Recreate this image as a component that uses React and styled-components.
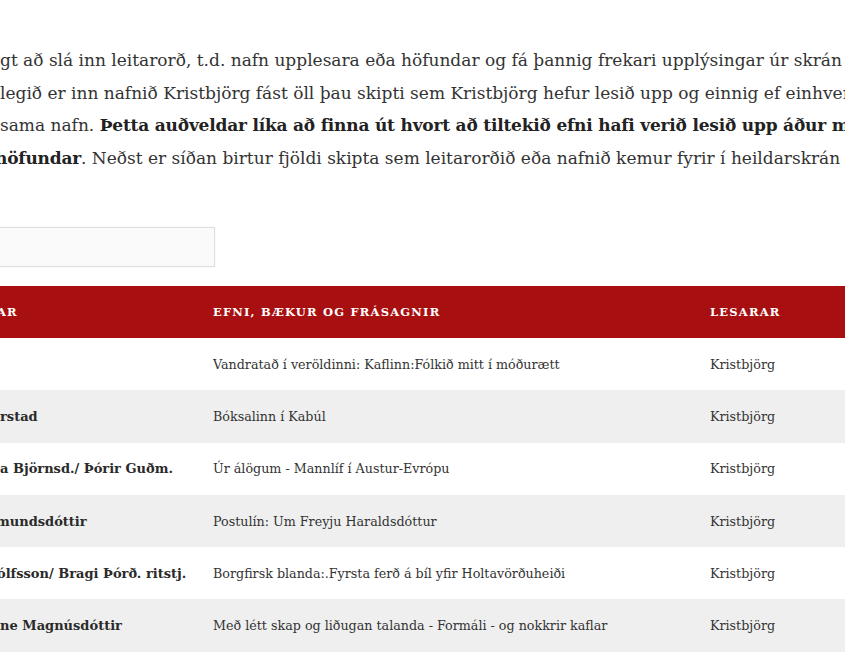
import React from "react";
import styled, { createGlobalStyle } from "styled-components";

const GlobalStyle = createGlobalStyle`
  html, body {
    margin: 0;
    padding: 0;
    background: #fff;
    overflow: hidden;
  }
  body {
    font-family: "DejaVu Serif", "Liberation Serif", serif;
    color: #333;
  }
`;

const rows = [
  { name: "", title: "Vandratað í veröldinni: Kaflinn:Fólkið mitt í móðurætt", reader: "Kristbjörg" },
  { name: "rstad", title: "Bóksalinn í Kabúl", reader: "Kristbjörg" },
  { name: "a Björnsd./ Þórir Guðm.", title: "Úr álögum - Mannlíf í Austur-Evrópu", reader: "Kristbjörg" },
  { name: "mundsdóttir", title: "Postulín: Um Freyju Haraldsdóttur", reader: "Kristbjörg", cut: 4 },
  { name: "ólfsson/ Bragi Þórð. ritstj.", title: "Borgfirsk blanda:.Fyrsta ferð á bíl yfir Holtavörðuheiði", reader: "Kristbjörg", cut: 3 },
  { name: "ne Magnúsdóttir", title: "Með létt skap og liðugan talanda - Formáli - og nokkrir kaflar", reader: "Kristbjörg" },
];

function App() {
  return (
    <Page>
      <GlobalStyle />
      <Intro>
        <Line>gt að slá inn leitarorð, t.d. nafn upplesara eða höfundar og fá þannig frekari upplýsingar úr skrán</Line>
        <Line>legið er inn nafnið Kristbjörg fást öll þau skipti sem Kristbjörg hefur lesið upp og einnig ef einhver</Line>
        <Line>sama nafn. <strong>Þetta auðveldar líka að finna út hvort að tiltekið efni hafi verið lesið upp áður með</strong></Line>
        <Line cut={5}><strong>höfundar</strong>. Neðst er síðan birtur fjöldi skipta sem leitarorðið eða nafnið kemur fyrir í heildarskrán</Line>
      </Intro>

      <Search type="text" />

      <Table>
        <thead>
          <tr>
            <Th cut={3}>AR</Th>
            <Th>Efni, bækur og frásagnir</Th>
            <Th>Lesarar</Th>
          </tr>
        </thead>
        <tbody>
          {rows.map((r, i) => (
            <Row key={i} odd={i % 2 === 1}>
              <NameCell cut={r.cut}>{r.name}</NameCell>
              <Td>{r.title}</Td>
              <Td>{r.reader}</Td>
            </Row>
          ))}
        </tbody>
      </Table>
    </Page>
  );
}

export default App;

const Page = styled.div`
  width: 845px;
  height: 661px;
  overflow: hidden;
  padding-top: 44px;
  box-sizing: border-box;
`;

const Intro = styled.p`
  margin: 0;
  font-size: 17px;
  line-height: 32.5px;
  color: #333;
  strong {
    font-weight: bold;
    color: #222;
    letter-spacing: -0.2px;
  }
`;

const Line = styled.span`
  display: block;
  white-space: nowrap;
  margin-left: ${(p) => (p.cut ? -p.cut : 0)}px;
`;

const Search = styled.input`
  display: block;
  margin: 53px 0 0 -10px;
  width: 225px;
  height: 40px;
  box-sizing: border-box;
  background: #fafafa;
  border: 1px solid #dedede;
  box-shadow: 0 0 2px rgba(0, 0, 0, 0.06);
  outline: none;
`;

const Table = styled.table`
  margin-top: 19px;
  width: 900px;
  border-collapse: collapse;
  table-layout: fixed;
`;

const Th = styled.th`
  background: #a80f10;
  color: #fff;
  height: 52px;
  padding: 0;
  text-align: left;
  text-transform: uppercase;
  font-size: 11.5px;
  font-weight: bold;
  letter-spacing: 1.2px;
  white-space: nowrap;
  text-indent: ${(p) => (p.cut ? -p.cut : 0)}px;
  &:first-child {
    width: 213px;
  }
  &:nth-child(2) {
    width: 497px;
  }
`;

const Row = styled.tr`
  background: ${(p) => (p.odd ? "#efefef" : "#fff")};
`;

const Td = styled.td`
  height: 52.3px;
  padding: 0;
  font-size: 12.7px;
  color: #333;
  white-space: nowrap;
  overflow: hidden;
`;

const NameCell = styled(Td)`
  font-size: 13px;
  font-weight: bold;
  color: #2a2a2a;
  text-indent: ${(p) => (p.cut ? -p.cut : 0)}px;
`;
